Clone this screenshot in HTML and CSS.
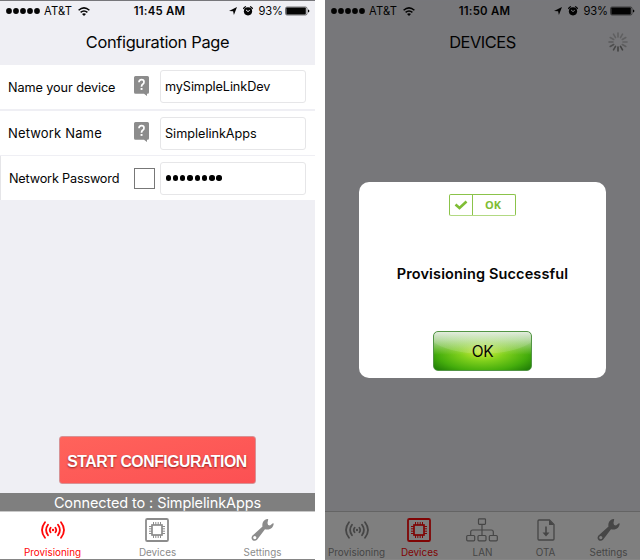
FILE: index.html
```html
<!DOCTYPE html>
<html lang="en">
<head>
<meta charset="utf-8">
<title>Provisioning</title>
<link rel="stylesheet" href="styles.css">
</head>
<body>
<svg class="defs" width="0" height="0">
  <symbol id="dots" viewBox="0 0 34 6"><circle cx="3" cy="3" r="2.9"/><circle cx="10" cy="3" r="2.9"/><circle cx="17" cy="3" r="2.9"/><circle cx="24" cy="3" r="2.9"/><circle cx="31" cy="3" r="2.9"/></symbol>
  <symbol id="wifi" viewBox="0 0 12 9"><g fill="none" stroke="currentColor" stroke-width="1.5"><path d="M.6 3.2Q6-1.5 11.4 3.2"/><path d="M2.6 5.4Q6 2.6 9.4 5.4"/></g><path d="M4 6.9Q6 5.4 8 6.9L6 9z"/></symbol>
  <symbol id="arrow" viewBox="0 0 8 8"><path d="M8 0L4.900 8 4.100 4.300 0 4z"/></symbol>
  <symbol id="alarm" viewBox="0 0 10 10"><path d="M.2 2.7L2.8.4M9.8 2.7L7.2.4" stroke="currentColor" stroke-width="1.2"/><circle cx="5" cy="5.3" r="4.1"/><path class="cut" d="M3 3.9l2 1.7 1.8-1.400" fill="none"/></symbol>
  <symbol id="battery" viewBox="0 0 25 9"><rect x=".5" y=".5" width="21.5" height="8" rx="1.5" fill="none" stroke="currentColor" stroke-opacity=".65" stroke-width=".8"/><rect x="1.3" y="1" width="19.500" height="7" rx=".7"/><path d="M23 3q1.4.2 1.4 1.5T23 6z"/></symbol>
  <symbol id="signal" viewBox="0 0 24 18"><g fill="none" stroke="currentColor" stroke-width="1.8" stroke-linecap="round"><path d="M4 1.2Q-2 9 4 16.8M20 1.2Q26 9 20 16.8M7 3.8Q3.200 9 7 14.200M17 3.800Q20.800 9 17 14.200M9.600 6.700Q7.900 9 9.600 11.300M14.400 6.700Q16.100 9 14.400 11.300"/></g><circle cx="12" cy="9" r="1.2"/></symbol>
  <symbol id="chip" viewBox="0 0 24 24"><g fill="none" stroke="currentColor"><rect x="1" y="1" width="22" height="22" rx="1.3" stroke-width="1.8"/><rect x="7" y="7" width="10" height="10" stroke-width="1.7"/><path stroke-width="1" d="M8.5 4v3M10.800 4v3M13.200 4v3M15.500 4v3M8.500 17v3M10.800 17v3M13.200 17v3M15.500 17v3M4 8.500h3M4 10.800h3M4 13.200h3M4 15.500h3M17 8.500h3M17 10.800h3M17 13.200h3M17 15.500h3"/></g></symbol>
  <symbol id="lan" viewBox="0 0 32 24"><g fill="none" stroke="currentColor" stroke-width="1.2"><rect x="12.500" y=".8" width="7" height="5.500" rx=".8"/><rect x=".7" y="17.500" width="8" height="5.300" rx="1"/><rect x="12" y="17.500" width="8" height="5.300" rx="1"/><rect x="23.300" y="17.500" width="8" height="5.300" rx="1"/><path d="M16 6.300v11.200M4.700 17.500V14q0-2 2-2h18.600q2 0 2 2v3.500"/></g></symbol>
  <symbol id="ota" viewBox="0 0 18 22"><path d="M2 1h10.500L17 5.500V20q0 1-1 1H2q-1 0-1-1V2q0-1 1-1z" fill="none" stroke="currentColor" stroke-width="1.300"/><path d="M12 1v5h5z"/><path d="M8.200 7.500h1.600v6H12.500L9 17.500 5.500 13.500h2.700z"/></symbol>
  <symbol id="wrench" viewBox="0 0 24 24"><path fill-rule="evenodd" d="M16.700.5q1.200-.3 1.300.4l-.8 3.800.6 2 2 .6 3-2.300q1-.3.9.8-.9 5-5.300 5.700-2.200.3-3.800-.3L6.300 22.200q-1.700 1.800-4.300.7Q-.5 21 1.300 18L12 8.400q-.7-3 1-5.600Q14.500.8 16.700.5zM3.900 18.200a1.700 1.700 0 1 0 .1 3.400 1.700 1.700 0 0 0-.1-3.400z"/></symbol>
  <symbol id="help" viewBox="0 0 15 20"><path d="M1.500 0h12Q15 0 15 1.500v14.700q0 1.500-1.500 1.500H13V20l-3-2.300H1.500Q0 17.700 0 16.200V1.500Q0 0 1.500 0z"/><path d="M5 6.200Q5 3.700 7.500 3.700T10 6q0 1.400-1.300 2.300Q7.500 9.200 7.500 10.800" fill="none" stroke="#fff" stroke-width="1.700"/><rect x="6.600" y="12" width="1.900" height="1.900" fill="#fff"/></symbol>
</svg>
<main class="screens">
  <section class="phone">
    <div class="status">
      <div class="carrier"><svg class="i-dots"><use href="#dots"/></svg><span>AT&amp;T</span><svg class="i-wifi"><use href="#wifi"/></svg></div>
      <div class="time">11:45 AM</div>
      <div class="power"><svg class="i-arrow"><use href="#arrow"/></svg><svg class="i-alarm"><use href="#alarm"/></svg><span>93%</span><svg class="i-battery"><use href="#battery"/></svg></div>
    </div>
    <header class="title"><h1>Configuration Page</h1></header>
    <form class="rows">
      <div class="row first"><span class="label name">Name your device</span><svg class="i-help"><use href="#help"/></svg><div class="field"><span class="v-name">mySimpleLinkDev</span></div></div>
      <div class="row second"><span class="label net">Network Name</span><svg class="i-help"><use href="#help"/></svg><div class="field"><span class="v-net">SimplelinkApps</span></div></div>
      <div class="row third"><span class="label pass">Network Password</span><i class="check"></i><div class="field"><span class="dots"><i></i><i></i><i></i><i></i><i></i><i></i><i></i><i></i></span></div></div>
    </form>
    <div class="space"><div class="start"><span>START CONFIGURATION</span></div></div>
    <div class="connected"><span>Connected to : SimplelinkApps</span></div>
    <nav class="tabs three">
      <div class="tab active"><svg class="i-signal"><use href="#signal"/></svg><span class="t-prov">Provisioning</span></div>
      <div class="tab"><svg class="i-chip"><use href="#chip"/></svg><span class="t-dev">Devices</span></div>
      <div class="tab"><svg class="i-wrench"><use href="#wrench"/></svg><span class="t-set">Settings</span></div>
    </nav>
  </section>
  <section class="phone">
    <div class="status">
      <div class="carrier"><svg class="i-dots"><use href="#dots"/></svg><span>AT&amp;T</span><svg class="i-wifi"><use href="#wifi"/></svg></div>
      <div class="time">11:50 AM</div>
      <div class="power"><svg class="i-arrow"><use href="#arrow"/></svg><svg class="i-alarm"><use href="#alarm"/></svg><span>93%</span><svg class="i-battery"><use href="#battery"/></svg></div>
    </div>
    <header class="title devices"><h1>DEVICES</h1>
      <svg class="spinner" viewBox="-10 -10 20 20"><g stroke="#777" stroke-width="1.600" stroke-linecap="round"><path d="M0-5V-9" opacity=".4"/><path d="M0-5V-9" transform="rotate(30)" opacity=".4"/><path d="M0-5V-9" transform="rotate(60)" opacity=".4"/><path d="M0-5V-9" transform="rotate(90)" opacity=".4"/><path d="M0-5V-9" transform="rotate(120)" opacity=".45"/><path d="M0-5V-9" transform="rotate(150)" opacity=".9"/><path d="M0-5V-9" transform="rotate(180)" opacity=".9"/><path d="M0-5V-9" transform="rotate(210)" opacity=".8"/><path d="M0-5V-9" transform="rotate(240)" opacity=".7"/><path d="M0-5V-9" transform="rotate(270)" opacity=".5"/><path d="M0-5V-9" transform="rotate(300)" opacity=".4"/><path d="M0-5V-9" transform="rotate(330)" opacity=".4"/></g></svg>
    </header>
    <div class="space"></div>
    <nav class="tabs five">
      <div class="tab"><svg class="i-signal"><use href="#signal"/></svg><span class="t-prov">Provisioning</span></div>
      <div class="tab active"><svg class="i-chip"><use href="#chip"/></svg><span class="t-dev">Devices</span></div>
      <div class="tab"><svg class="i-lan"><use href="#lan"/></svg><span>LAN</span></div>
      <div class="tab"><svg class="i-ota"><use href="#ota"/></svg><span>OTA</span></div>
      <div class="tab"><svg class="i-wrench"><use href="#wrench"/></svg><span class="t-set">Settings</span></div>
    </nav>
    <div class="overlay">
      <div class="dialog">
        <div class="badge"><svg viewBox="0 0 14 10"><path d="M1.500 4.500L5.500 8 12.500 1.500" fill="none" stroke="#7fbd35" stroke-width="2.600"/></svg><b>OK</b></div>
        <p>Provisioning Successful</p>
        <div class="ok"><span>OK</span></div>
      </div>
    </div>
  </section>
</main>
</body>
</html>
```
FILE: styles.css
```css
* { box-sizing: border-box; }
body { margin: 0; background: #fff; font-family: Inter, "Liberation Sans", sans-serif; color: #050505; overflow: hidden; }
.defs { display: block; }
svg { display: block; flex: none; fill: currentColor; }
span, h1, p, .time { white-space: nowrap; }
.screens { display: grid; grid-template-columns: 315px 315px; column-gap: 10px; height: 560px; }
.phone { position: relative; display: flex; flex-direction: column; height: 560px; background: #efeff4; border-top: 1px solid #77777b; border-bottom: 1px solid #858585; overflow: hidden; }
.status { height: 19px; display: grid; grid-template-columns: 1fr auto 1fr; align-items: center; padding: 1px 5px 0 6px; font-size: 11.2px; line-height: 18px; }
.carrier { letter-spacing: .15px; }
.carrier, .power { display: flex; align-items: center; }
.power { justify-content: flex-end; }
.i-dots { width: 34px; height: 6px; margin-right: 4px; }
.i-wifi { width: 12px; height: 9px; margin-left: 6px; }
.time { font-weight: 600; font-size: 11.4px; letter-spacing: .25px; margin-left: 3px; }
.i-arrow { width: 8px; height: 8px; margin-right: 6px; }
.i-alarm { width: 10px; height: 10px; margin-right: 5px; }
.cut { stroke: #efeff4; stroke-width: 1; }
.i-battery { width: 25px; height: 10px; margin-left: 2px; }
.power span { letter-spacing: -.1px; }
.title { height: 45px; display: grid; place-items: center; }
h1 { margin: 0; font-size: 16.4px; font-weight: 400; letter-spacing: -.33px; line-height: 45px; }
.title.devices { grid-template-columns: 1fr auto 1fr; padding-right: 12px; padding-left: 12px; }
.devices h1 { grid-column: 2; letter-spacing: -.45px; }
.spinner { justify-self: end; width: 20px; height: 20px; margin-top: -1px; }
.rows { margin: 0; }
.row { height: 44px; display: grid; grid-template-columns: 126px 26px 146px; align-items: center; padding-left: 8px; background: #fff; }
.first .field { margin-top: -1px; }
.second { margin-top: 2px; }
.third { margin-top: 1px; border-left: 1px solid #e5e5e8; grid-template-columns: 125px 26px 146px; }
.label { font-size: 12.7px; }
.name { letter-spacing: -.09px; }
.net { font-size: 13px; letter-spacing: .16px; }
.pass { letter-spacing: -.19px; }
.v-name { letter-spacing: -.1px; }
.v-net { letter-spacing: -.03px; }
.i-help { width: 15px; height: 20px; color: #8c8c8c; margin-top: -2px; }
.field { height: 33px; border: 1px solid #e6e6e8; border-radius: 3px; padding-left: 4px; font-size: 12.7px; line-height: 31px; }
.check { width: 21px; height: 21px; border: 1px solid #777; }
.dots { display: flex; gap: 1.9px; height: 31px; padding-left: .5px; align-items: center; }
.dots i { width: 5.4px; height: 5.4px; border-radius: 50%; background: #000; }
.space { flex: 1; display: flex; align-items: flex-end; padding-left: 59px; }
.start { width: 197px; height: 48px; margin-bottom: 9px; border: 1px solid #d79295; border-radius: 3px; background: linear-gradient(165deg, #ff635b, #fc5053); display: grid; place-items: center; color: #fff; font: bold 15.8px "Liberation Sans", sans-serif; letter-spacing: -.45px; padding: 3px 1px 0 0; text-shadow: 0 1px 2px rgba(90,0,0,.65); }
.connected { height: 18px; background: #7f7f7f; color: #fff; text-align: center; font-size: 14.5px; line-height: 19px; letter-spacing: -.1px; }
.tabs { height: 48px; background: #fff; border-top: 1px solid #c8c8c8; display: grid; }
.three { grid-template-columns: repeat(3, 105px); }
.five { grid-template-columns: repeat(5, 63px); }
.tab { display: grid; grid-template-rows: 35px 13px; place-items: center; color: #8c8c8c; font-size: 9.9px; line-height: 12px; }
.tab span { margin: -3px 0 0 0; }
.active { color: #ff0808; }
.i-signal { width: 24px; height: 18px; }
.i-chip { width: 24px; height: 24px; margin-right: 1px; }
.i-wrench { width: 23px; height: 24px; }
.i-lan { width: 32px; height: 24px; margin-right: 1px; }
.i-ota { width: 18px; height: 22px; }
.overlay { position: absolute; inset: -1px 0; background: rgba(0,0,0,.5); padding: 182px 34px; }
.dialog { width: 247px; height: 196px; background: #fff; border-radius: 10px; display: flex; flex-direction: column; align-items: center; padding-top: 12px; }
.badge { width: 67px; height: 22px; border: 1px solid #8bc34a; border-bottom-color: #b2d982; border-radius: 2px; display: grid; grid-template-columns: 22px 1fr; color: #7fbd35; }
.badge svg { width: 14px; height: 10px; align-self: center; justify-self: center; }
.badge b { border-left: 1px solid #8bc34a; padding-right: 2px; text-align: center; font: bold 11px/20px "Open Sans", sans-serif; }
.dialog p { margin: 48px 0 0; height: 20px; line-height: 20px; font-size: 14.5px; font-weight: 600; letter-spacing: .13px; }
.ok { width: 99px; height: 40px; margin-top: 47px; border: 1px solid #529544; border-radius: 5px; text-align: center; font-size: 15.5px; line-height: 39px; letter-spacing: -.5px; background: radial-gradient(ellipse 100% 100% at 50% 0, rgba(235,243,225,.15) 0, rgba(225,240,205,.15) 56%, transparent 58%), linear-gradient(#e3ece0 0, rgba(218,235,208,.75) 20%, rgba(185,220,145,.35) 45%, transparent 60%), radial-gradient(ellipse 68% 75% at 50% 50%, #d8f03c, #80d01c 35%, #45ad0c 70%, #1a7606); }
```
